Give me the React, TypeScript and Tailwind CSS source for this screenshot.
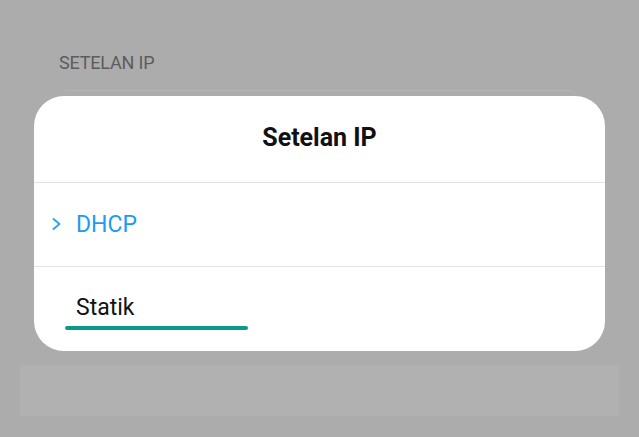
import React from 'react';

const ChevronRight = ({ className }: { className?: string }) => (
  <svg viewBox="0 0 9 12" className={className} fill="none" stroke="currentColor" strokeWidth="1.9" strokeLinecap="round" strokeLinejoin="round">
    <path d="M1.5 1l6 5-6 5" />
  </svg>
);

export default function App() {
  return (
    <div className="w-[639px] h-[437px] bg-[#acacac] overflow-hidden flex flex-col" style={{ fontFamily: 'Roboto, "Noto Sans", sans-serif' }}>
      <div className="pt-[52px] pl-[59px] h-[96px]">
        <p className="text-[18px] leading-[22px] text-[#5c5c5c] tracking-[-0.01em]">SETELAN IP</p>
      </div>

      {/* faint card peeking behind the dialog */}
      <div className="relative mx-[34px]">
        <div className="absolute left-[25px] right-[26px] -top-[6px] h-[20px] rounded-t-[10px] border-t border-[#b4b4b4]" />

        <div className="relative bg-white rounded-[30px] flex flex-col">
          <div className="h-[86px] flex items-center justify-center">
            <h2 className="text-[25px] font-bold text-[#111] -mt-[3px]">Setelan IP</h2>
          </div>
          <div className="h-px bg-[#e2e2e2]" />

          <button className="h-[83px] flex items-center pl-[18px] text-[#1a9cf2]">
            <ChevronRight className="w-[9px] h-[12px] mr-[15px] -mt-[1px] text-[#2aa3f4]" />
            <span className="text-[23px] leading-none">DHCP</span>
          </button>
          <div className="h-px bg-[#e2e2e2]" />

          <div className="h-[84px] pl-[31px] pt-[28px] flex flex-col">
            <span className="pl-[11px] text-[23px] leading-[26px] text-[#111]">Statik</span>
            <div className="mt-[5px] w-[183px] h-[4px] rounded-full bg-[#0a9a8a]" />
          </div>
        </div>
      </div>

      <div className="mx-[20px] mt-[14px] h-[51px] bg-[#b1b1b1]" />
    </div>
  );
}
